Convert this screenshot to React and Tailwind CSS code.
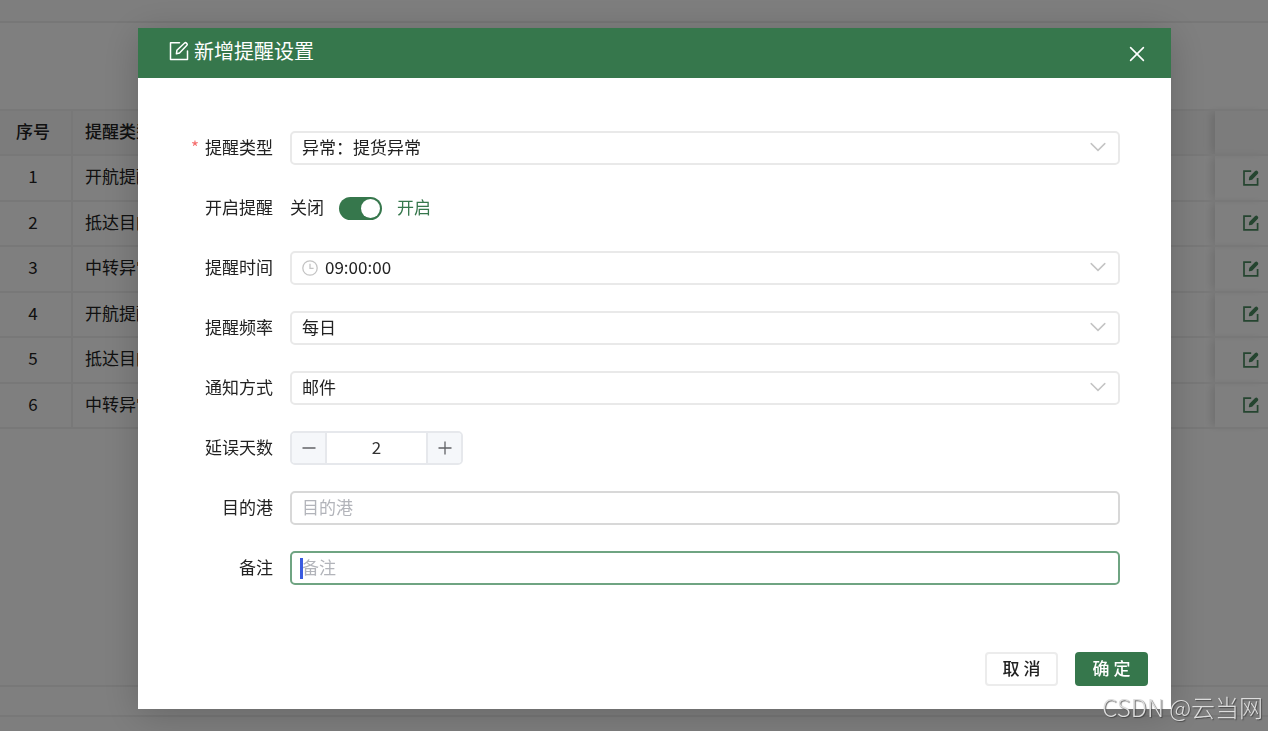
import React from "react";

const FONT = "font-['Noto_Sans_CJK_SC','Noto_Sans',sans-serif]";

const ROWS = ["开航提醒", "抵达目的港", "中转异常", "开航提醒", "抵达目的港", "中转异常"];

function EditIcon() {
  return (
    <svg viewBox="0 0 20 20" className="size-5" fill="none" stroke="currentColor" strokeWidth="1.5" aria-hidden="true">
      <path d="M10.5 1.7H1.5v16.8h17V10" strokeLinejoin="round" strokeLinecap="round" />
      <path d="M7.4 12.8l.5-3.5 7.7-7.3q.9-.8 1.8.1l.5.5q.8.9 0 1.7l-7.4 7.8z" strokeLinejoin="round" />
    </svg>
  );
}

function SolidEditIcon() {
  return (
    <svg viewBox="0 0 16 16" className="size-4" fill="none" stroke="currentColor" aria-hidden="true">
      <path d="M8.2 1.2H1v13.6h13.6V8" strokeWidth="1.7" />
      <path d="M6.6 9.6l.4-2.3 5.4-5.4q.9-.9 1.7-.2t0 1.8L8.8 9z" fill="currentColor" strokeWidth="1.5" strokeLinejoin="round" />
    </svg>
  );
}

function Field({ id, label, required, children }) {
  return (
    <div className="flex h-[34px] items-center gap-[17px]">
      <label htmlFor={id} className="flex w-[103px] shrink-0 items-center justify-end gap-[6px] pb-[3px]">
        {required && <span className="text-[#f56c6c]">*</span>}
        {label}
      </label>
      {children}
    </div>
  );
}

function Select({ id, value, icon }) {
  return (
    <div className="relative h-full flex-1">
      <select
        id={id}
        defaultValue={value}
        className={`${icon ? "pl-[33px]" : "pl-[10px]"} h-full w-full appearance-none rounded-[5px] border-2 border-[#e9e9e9] bg-white pr-9 pb-[3px] leading-6 outline-none`}
      >
        <option>{value}</option>
      </select>
      {icon && (
        <svg viewBox="0 0 16 16" className="pointer-events-none absolute top-[9px] left-[12px] size-4" fill="none" stroke="#c4c4c4" strokeWidth="1.3" aria-hidden="true">
          <circle cx="8" cy="8" r="7.2" />
          <path d="M8 3.8v4.6h3.6" />
        </svg>
      )}
      <svg viewBox="0 0 16 16" className="pointer-events-none absolute top-[8px] right-[14px] size-4" fill="none" stroke="#c4c4c4" strokeWidth="1.5" strokeLinecap="round" aria-hidden="true">
        <path d="M1.2 4.6L8 11.4l6.8-6.8" />
      </svg>
    </div>
  );
}

function BackgroundPage() {
  return (
    <div className="flex min-h-screen flex-col bg-white">
      <header className="h-[23px] border-b-2 border-[#eeeeee] bg-[#fcfcfc]" />
      <div className="h-[86px]" />
      <table className="h-[320px] w-full table-fixed border-collapse border-y-2 border-[#f0f0f0]">
        <colgroup>
          <col className="w-[72px]" />
          <col />
          <col className="w-[53px]" />
        </colgroup>
        <thead>
          <tr className="h-[45px] border-b-2 border-[#f0f0f0] bg-[#f8f8f8]">
            <th className="border-r-2 border-[#f0f0f0] pr-[5px] pb-[3px] font-medium">序号</th>
            <th className="pb-[3px] pl-[12px] text-left font-medium">提醒类型</th>
            <th className="shadow-[-6px_0_8px_-2px_rgba(0,0,0,0.12)]" />
          </tr>
        </thead>
        <tbody>
          {ROWS.map((name, i) => (
            <tr key={i} className="h-[45px] border-b-2 border-[#f0f0f0]">
              <td className="border-r-2 border-[#f0f0f0] pr-[5px] pb-[3px] text-center">{i + 1}</td>
              <td className="pb-[3px] pl-[12px]">{name}</td>
              <td className="pl-[28px] align-middle shadow-[-6px_0_8px_-2px_rgba(0,0,0,0.12)]">
                <button type="button" aria-label="编辑" className="block text-[#4a8a60]">
                  <SolidEditIcon />
                </button>
              </td>
            </tr>
          ))}
        </tbody>
      </table>
      <div className="flex-1" />
      <div className="h-[30px] border-t-2 border-[#f0f0f0]" />
      <footer className="h-[16px] border-t-2 border-[#f0f0f0] bg-[#fcfcfc]" />
    </div>
  );
}

function ReminderDialog() {
  return (
    <div role="dialog" aria-modal="true" aria-labelledby="dialog-title" className="bg-white shadow-[0_6px_36px_rgba(0,0,0,0.2)]">
      <div className="flex h-[50px] items-center justify-between bg-[#36774c] pr-[26px] pl-[31px] text-white">
        <h2 id="dialog-title" className="flex items-center gap-[5px] pb-[4px] text-[20px] leading-7">
          <EditIcon />
          新增提醒设置
        </h2>
        <button type="button" aria-label="关闭窗口" className="pt-[2px]">
          <svg viewBox="0 0 16 16" className="size-4" fill="none" stroke="currentColor" strokeWidth="1.6" strokeLinecap="round" aria-hidden="true">
            <path d="M1.6 1.6l12.8 12.8M14.4 1.6L1.6 14.4" />
          </svg>
        </button>
      </div>

      <form onSubmit={(e) => e.preventDefault()}>
        <div className="flex flex-col gap-[26px] pt-[53px] pr-[51px] pb-[67px] pl-8">
          <Field id="type" label="提醒类型" required>
            <Select id="type" value="异常：提货异常" />
          </Field>
          <Field id="enabled" label="开启提醒">
            <div className="flex items-center gap-[15px]">
              <span className="pb-[3px]">关闭</span>
              <input
                id="enabled"
                type="checkbox"
                role="switch"
                defaultChecked
                className="flex h-[23px] w-[43px] appearance-none items-center rounded-full bg-[#c9c9c9] px-[2px] before:size-[19px] before:rounded-full before:bg-white checked:justify-end checked:bg-[#36774c]"
              />
              <span className="pb-[3px] text-[#36774c]">开启</span>
            </div>
          </Field>
          <Field id="time" label="提醒时间">
            <Select id="time" value="09:00:00" icon />
          </Field>
          <Field id="frequency" label="提醒频率">
            <Select id="frequency" value="每日" />
          </Field>
          <Field id="method" label="通知方式">
            <Select id="method" value="邮件" />
          </Field>
          <Field id="days" label="延误天数">
            <div className="flex h-full w-[173px] overflow-hidden rounded-[5px] border-2 border-[#e6e8ec] text-[#606266]">
              <button type="button" aria-label="减少" className="flex w-[35px] items-center justify-center border-r-2 border-[#e6e8ec] bg-[#f5f7fa]">
                <svg viewBox="0 0 14 14" className="size-[14px]" stroke="currentColor" strokeWidth="1.3" aria-hidden="true">
                  <path d="M.5 7h13" />
                </svg>
              </button>
              <input id="days" type="text" inputMode="numeric" defaultValue="2" className="w-0 flex-1 pb-[3px] text-center text-[#333333] outline-none" />
              <button type="button" aria-label="增加" className="flex w-[35px] items-center justify-center border-l-2 border-[#e6e8ec] bg-[#f5f7fa]">
                <svg viewBox="0 0 14 14" className="size-[14px]" stroke="currentColor" strokeWidth="1.3" aria-hidden="true">
                  <path d="M.5 7h13M7 .5v13" />
                </svg>
              </button>
            </div>
          </Field>
          <Field id="port" label="目的港">
            <input id="port" type="text" placeholder="目的港" className="h-full flex-1 rounded-[5px] border-2 border-[#d8d8d8] px-[10px] pb-[3px] outline-none placeholder:text-[#b2b4ba]" />
          </Field>
          <Field id="remark" label="备注">
            <div className="relative h-full flex-1">
              <input id="remark" type="text" placeholder="备注" className="h-full w-full rounded-[5px] border-2 border-[#6fa482] px-[10px] pb-[3px] caret-[#3a5be0] outline-none placeholder:text-[#b2b4ba]" />
              <span className="pointer-events-none absolute top-[7px] left-[10px] h-[21px] w-[3px] bg-[#3a5be0]" />
            </div>
          </Field>
        </div>
        <div className="flex justify-end gap-[17px] pr-[23px] pb-[23px] font-medium">
          <button type="button" className="h-[34px] w-[73px] rounded-[4px] border-2 border-[#ececec] bg-white pb-[2px]">取 消</button>
          <button type="submit" className="h-[34px] w-[73px] rounded-[4px] bg-[#36774c] pb-[2px] text-white">确 定</button>
        </div>
      </form>
    </div>
  );
}

export default function App() {
  return (
    <div className={`${FONT} text-[17px] leading-6 text-[#222222]`}>
      <BackgroundPage />
      <div className="fixed inset-0 overflow-auto bg-black/50 pt-7 pr-[97px] pl-[138px]">
        <ReminderDialog />
      </div>
      <div className="pointer-events-none fixed right-[5px] bottom-[6px] text-[24px] leading-9 font-light text-[#dddddd] [text-shadow:1px_1px_1px_rgba(60,60,60,0.8)]">
        CSDN @云当网
      </div>
    </div>
  );
}
